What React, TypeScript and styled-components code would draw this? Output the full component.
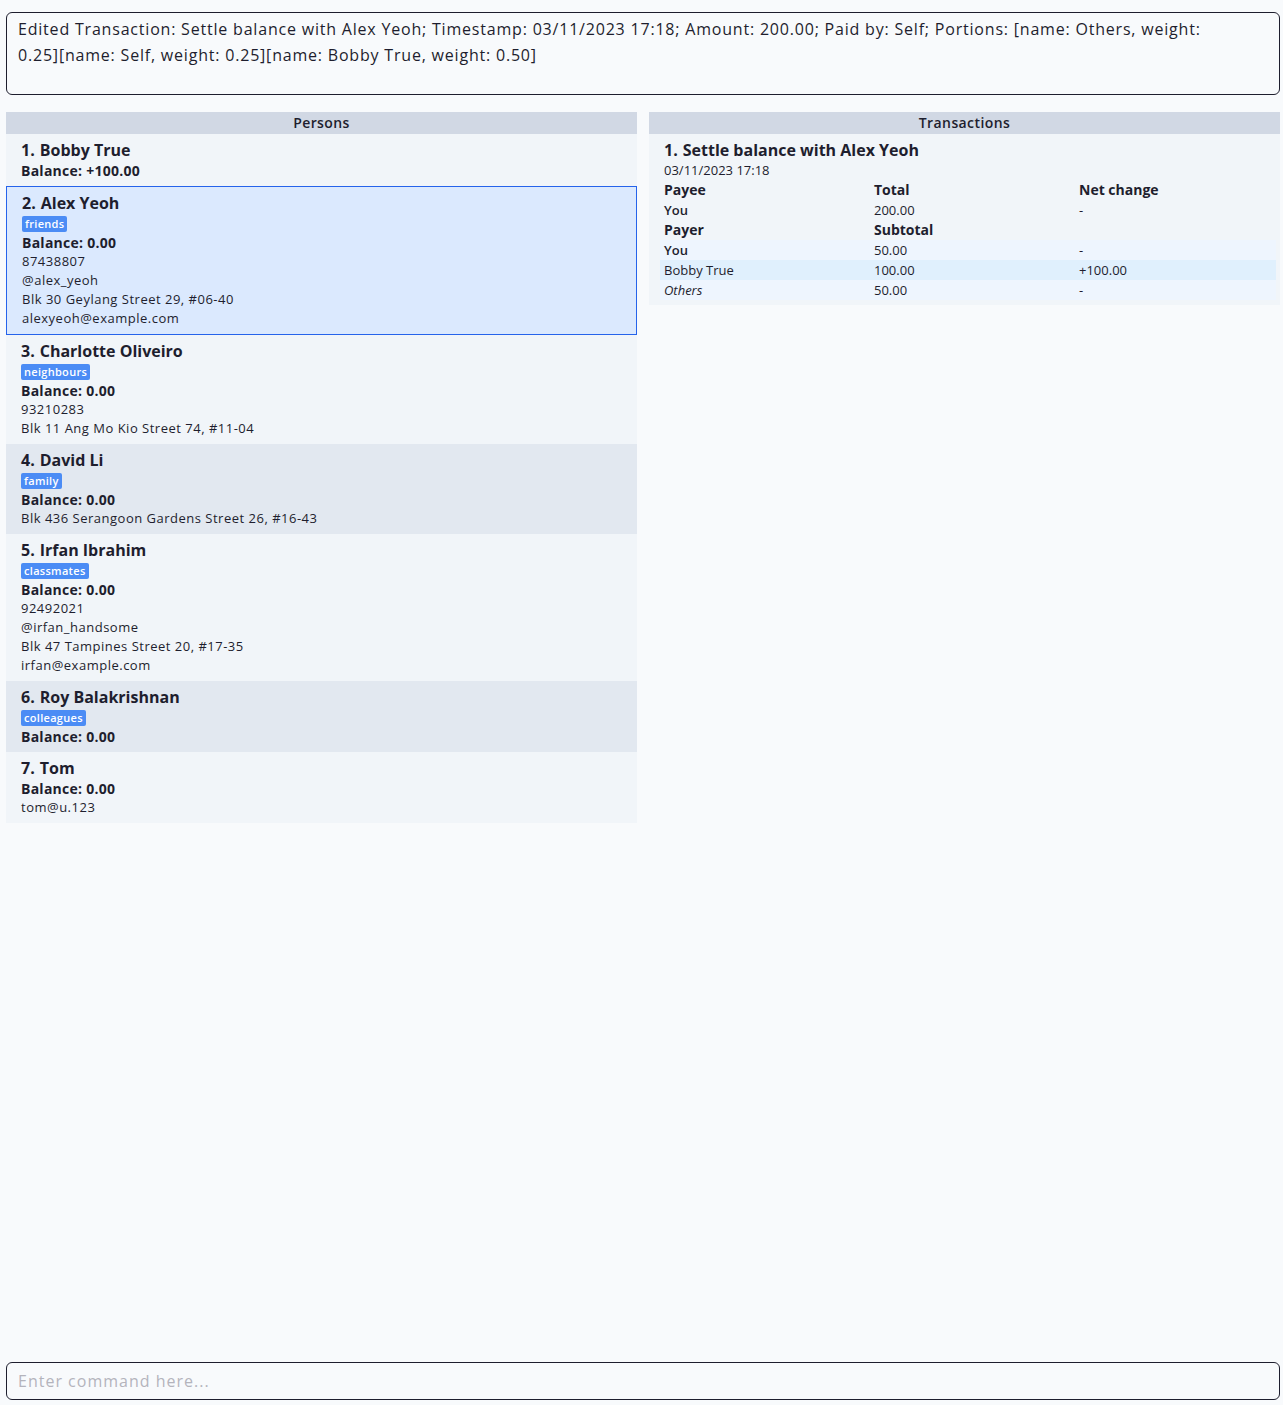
import React from "react";
import styled, { createGlobalStyle } from "styled-components";

const GlobalStyle = createGlobalStyle`
  html, body { margin: 0; padding: 0; background: #f8fafc; }
  body { font-family: "Open Sans", "Noto Sans", sans-serif; color: #1e1e2e; }
  * { box-sizing: border-box; }
`;

const Page = styled.div`
  display: flex;
  flex-direction: column;
  height: 100vh;
  padding: 12px 3px 5px 6px;
`;

const ResultBox = styled.div`
  height: 83px;
  border: 1px solid #1e1e2e;
  border-radius: 6px;
  padding: 3px 50px 0 11px;
  font-size: 16px;
  line-height: 26px;
  letter-spacing: 0.8px;
  color: #1e1e2e;
`;

const Panels = styled.div`
  flex: 1;
  display: grid;
  grid-template-columns: 1fr 1fr;
  column-gap: 12px;
  margin-top: 17px;
  align-items: start;
`;

const Panel = styled.section`
  display: flex;
  flex-direction: column;
`;

const PanelHeader = styled.div`
  height: 22px;
  background: #d1d8e4;
  text-align: center;
  font-size: 14px;
  font-weight: 600;
  letter-spacing: 0.4px;
  line-height: 22px;
  color: #1e1e2e;
`;

const Card = styled.div<{ $tone: "light" | "dark" | "selected" }>`
  display: flex;
  flex-direction: column;
  padding: 5px 15px 6px;
  background: ${(p) =>
    p.$tone === "selected" ? "#dbe9fe" : p.$tone === "dark" ? "#e2e8f0" : "#f1f5f9"};
  border: ${(p) => (p.$tone === "selected" ? "1px solid #2563eb" : "none")};
`;

const Title = styled.div`
  display: flex;
  font-size: 16px;
  font-weight: 700;
  line-height: 22px;
  color: #1e1e2e;
  white-space: pre;
`;

const Num = styled.span`
  margin-right: 5px;
`;

const Tag = styled.span`
  align-self: flex-start;
  background: #4b8cf5;
  color: #fff;
  font-size: 11px;
  font-weight: 600;
  letter-spacing: 0.3px;
  line-height: 16px;
  padding: 0 3px;
  border-radius: 2px;
  margin: 2px 0 1px;
`;

const Balance = styled.div`
  font-size: 14px;
  font-weight: 700;
  letter-spacing: 0.25px;
  line-height: 19px;
`;

const Detail = styled.div`
  font-size: 13px;
  letter-spacing: 0.5px;
  line-height: 19px;
`;

const TxCard = styled.div`
  background: #f1f5f9;
  padding: 5px 4px 5px 11px;
  display: flex;
  flex-direction: column;
`;

const TxTitle = styled(Title)`
  padding-left: 4px;
`;

const TxTime = styled.div`
  font-size: 13px;
  line-height: 19px;
  padding-left: 4px;
`;

const Row = styled.div<{ $bg?: string }>`
  display: grid;
  grid-template-columns: 210px 205px 1fr;
  padding-left: 4px;
  background: ${(p) => p.$bg || "transparent"};
`;

const HeadCell = styled.div`
  font-size: 14px;
  font-weight: 700;
  line-height: 20px;
`;

const Cell = styled.div<{ $strong?: boolean; $italic?: boolean }>`
  font-size: 13px;
  line-height: 20px;
  font-weight: ${(p) => (p.$strong ? 600 : 400)};
  font-style: ${(p) => (p.$italic ? "italic" : "normal")};
`;

const CommandBox = styled.div`
  height: 38px;
  border: 1px solid #1e1e2e;
  border-radius: 6px;
  padding: 0 11px;
  display: flex;
  align-items: center;
  font-size: 16px;
  letter-spacing: 1px;
  color: #b4b4bc;
`;

type Person = {
  name: string;
  tag?: string;
  balance: string;
  details: string[];
};

const persons: Person[] = [
  { name: "Bobby True", balance: "+100.00", details: [] },
  {
    name: "Alex Yeoh",
    tag: "friends",
    balance: "0.00",
    details: ["87438807", "@alex_yeoh", "Blk 30 Geylang Street 29, #06-40", "alexyeoh@example.com"],
  },
  {
    name: "Charlotte Oliveiro",
    tag: "neighbours",
    balance: "0.00",
    details: ["93210283", "Blk 11 Ang Mo Kio Street 74, #11-04"],
  },
  {
    name: "David Li",
    tag: "family",
    balance: "0.00",
    details: ["Blk 436 Serangoon Gardens Street 26, #16-43"],
  },
  {
    name: "Irfan Ibrahim",
    tag: "classmates",
    balance: "0.00",
    details: ["92492021", "@irfan_handsome", "Blk 47 Tampines Street 20, #17-35", "irfan@example.com"],
  },
  { name: "Roy Balakrishnan", tag: "colleagues", balance: "0.00", details: [] },
  { name: "Tom", balance: "0.00", details: ["tom@u.123"] },
];

export default function App() {
  return (
    <>
      <GlobalStyle />
      <Page>
        <ResultBox>
          Edited Transaction: Settle balance with Alex Yeoh; Timestamp: 03/11/2023 17:18; Amount: 200.00; Paid by: Self; Portions: [name: Others, weight: 0.25][name: Self, weight: 0.25][name: Bobby True, weight: 0.50]
        </ResultBox>
        <Panels>
          <Panel>
            <PanelHeader>Persons</PanelHeader>
            {persons.map((p, i) => (
              <Card key={p.name} $tone={i === 1 ? "selected" : i % 2 === 1 ? "dark" : "light"}>
                <Title>
                  <Num>{i + 1}.</Num>
                  {p.name}
                </Title>
                {p.tag && <Tag>{p.tag}</Tag>}
                <Balance>Balance: {p.balance}</Balance>
                {p.details.map((d) => (
                  <Detail key={d}>{d}</Detail>
                ))}
              </Card>
            ))}
          </Panel>
          <Panel>
            <PanelHeader>Transactions</PanelHeader>
            <TxCard>
              <TxTitle>
                <Num>1.</Num>Settle balance with Alex Yeoh
              </TxTitle>
              <TxTime>03/11/2023 17:18</TxTime>
              <Row>
                <HeadCell>Payee</HeadCell>
                <HeadCell>Total</HeadCell>
                <HeadCell>Net change</HeadCell>
              </Row>
              <Row>
                <Cell $strong>You</Cell>
                <Cell>200.00</Cell>
                <Cell>-</Cell>
              </Row>
              <Row>
                <HeadCell>Payer</HeadCell>
                <HeadCell>Subtotal</HeadCell>
                <HeadCell />
              </Row>
              <Row $bg="#eef5fe">
                <Cell $strong>You</Cell>
                <Cell>50.00</Cell>
                <Cell>-</Cell>
              </Row>
              <Row $bg="#e0f0fd">
                <Cell>Bobby True</Cell>
                <Cell>100.00</Cell>
                <Cell>+100.00</Cell>
              </Row>
              <Row $bg="#eef5fe">
                <Cell $italic>Others</Cell>
                <Cell>50.00</Cell>
                <Cell>-</Cell>
              </Row>
            </TxCard>
          </Panel>
        </Panels>
        <CommandBox>Enter command here...</CommandBox>
      </Page>
    </>
  );
}
